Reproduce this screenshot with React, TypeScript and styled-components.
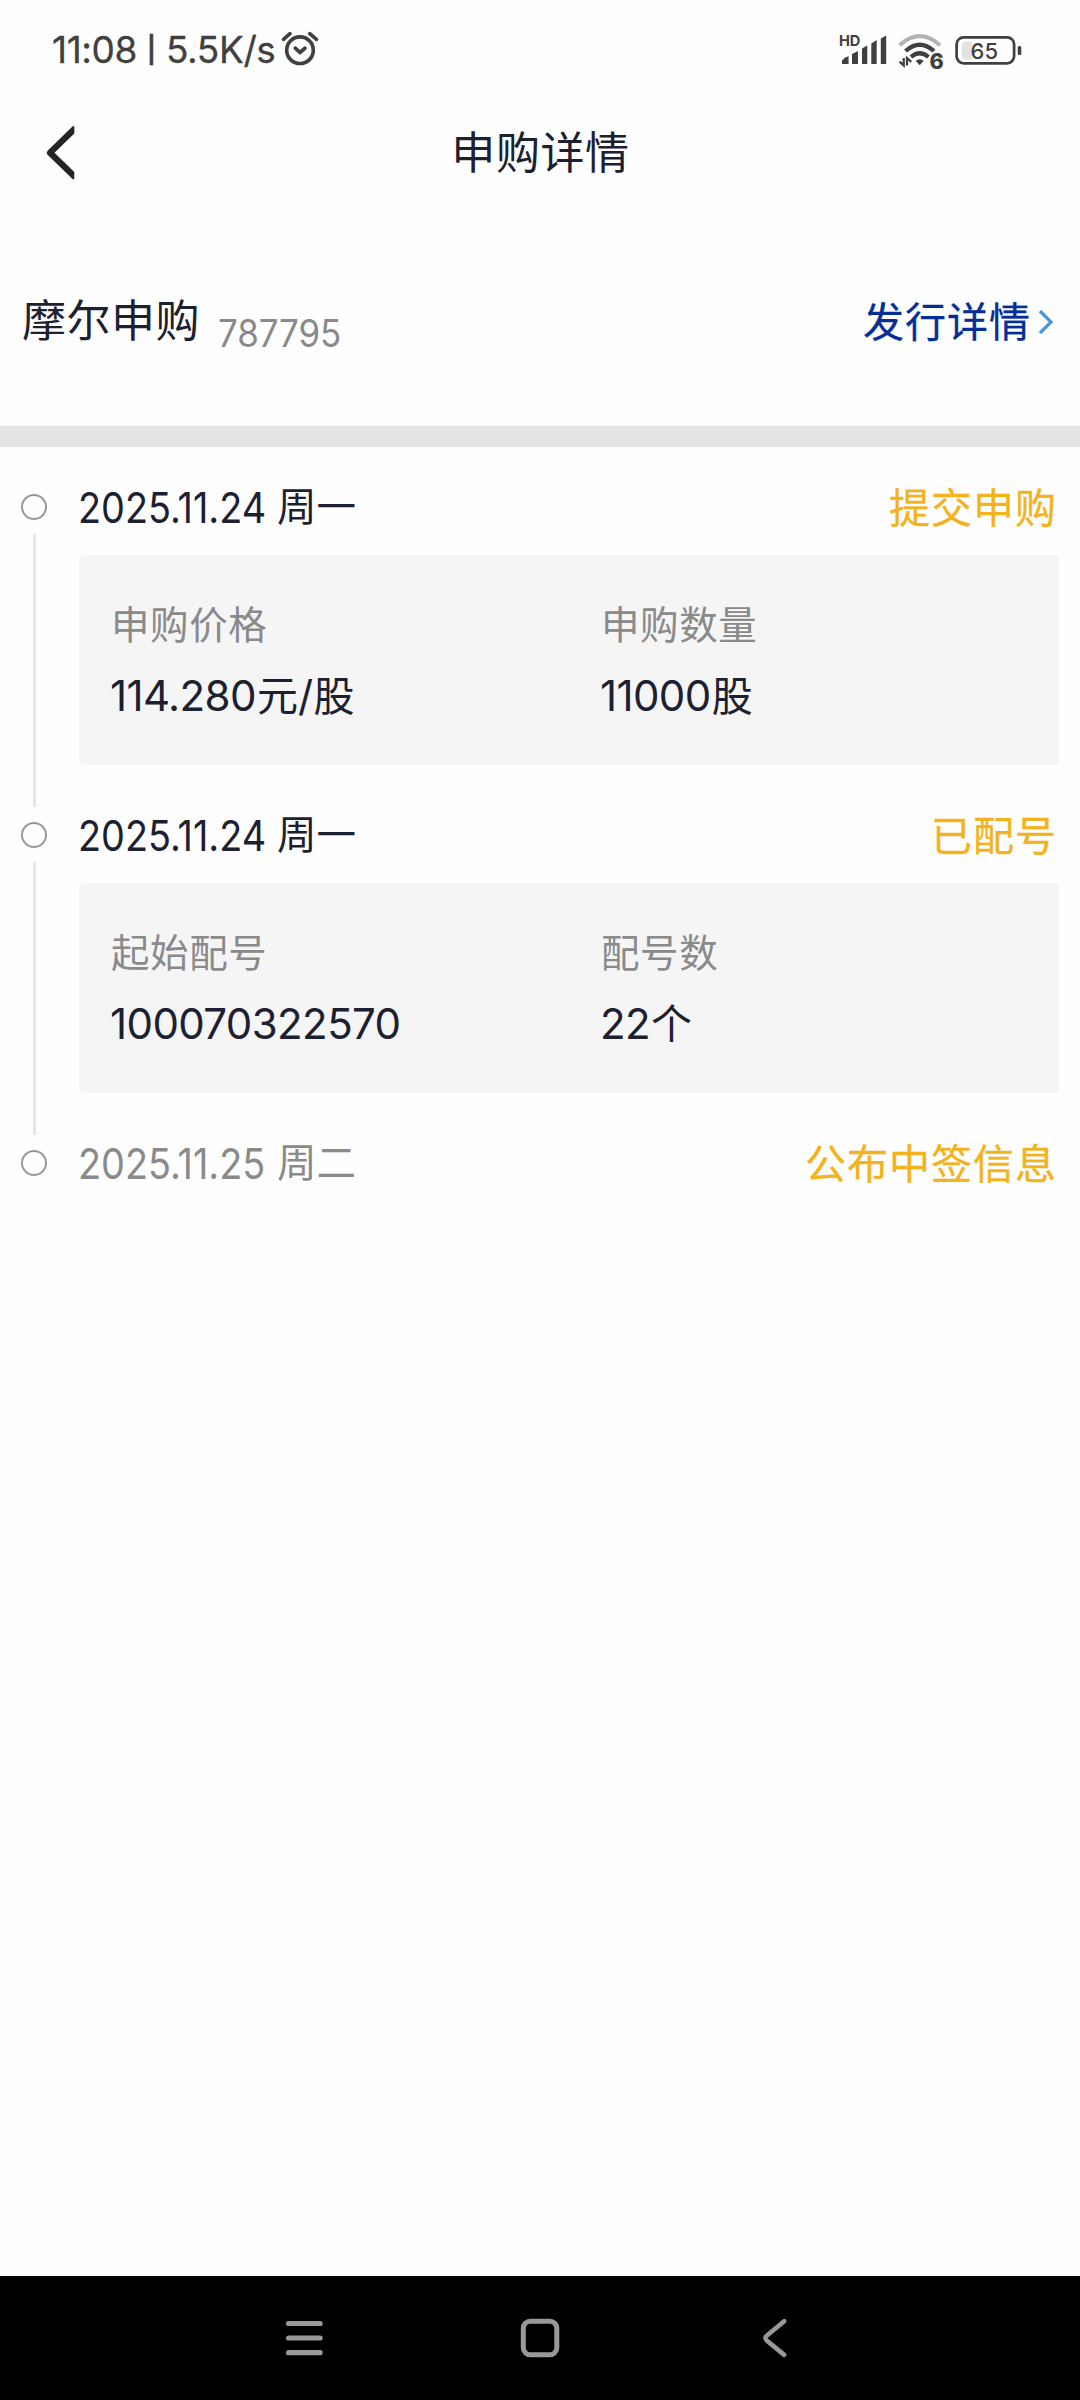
import React from "react";
import styled, { createGlobalStyle } from "styled-components";

const GlobalStyle = createGlobalStyle`
  * { box-sizing: border-box; }
  html, body { margin: 0; padding: 0; background: #fff; }
  body { font-family: Inter, "Noto Sans CJK SC", sans-serif; }
`;

const Screen = styled.div`
  width: 1080px;
  height: 2400px;
  display: flex;
  flex-direction: column;
  background: #fefefe;
  color: #1c2030;
  overflow: hidden;
`;

const StatusBar = styled.div`
  height: 100px;
  padding: 0 58px 0 52px;
  display: flex;
  align-items: center;
  justify-content: space-between;
  color: #404040;
`;

const StatusGroup = styled.div<{ $gap: number }>`
  display: flex;
  align-items: center;
  gap: ${(p) => p.$gap}px;
`;

const Clock = styled.span`
  display: flex;
  align-items: center;
  font-size: 37px;
  line-height: 60px;
  letter-spacing: -0.4px;
  white-space: pre;
  -webkit-text-stroke: 0.3px currentColor;
`;

const ClockPipe = styled.span`
  width: 29px;
  text-align: center;
  font-size: 26px;
  font-weight: 600;
  letter-spacing: 0;
`;

const NavBar = styled.div`
  height: 106px;
  display: grid;
  grid-template-columns: 120px 1fr 120px;
  align-items: center;
`;

const Title = styled.h1`
  margin: 0;
  padding: 0 0 0 1px;
  text-align: center;
  font-weight: 400;
  font-size: 44px;
  line-height: 60px;
  letter-spacing: 0.6px;
`;

const Summary = styled.section`
  height: 220px;
  padding: 10px 26px 0 22px;
  display: flex;
  align-items: center;
  justify-content: space-between;
`;

const Stock = styled.div`
  display: flex;
  align-items: center;
`;

const StockName = styled.span`
  font-size: 44px;
  line-height: 64px;
  letter-spacing: 0.5px;
`;

const StockCode = styled.span`
  margin: 24px 0 0 18px;
  font-size: 38px;
  line-height: 48px;
  letter-spacing: -0.1px;
  color: #8a8a8a;
  transform: scaleX(0.92);
  transform-origin: left center;
`;

const DetailLink = styled.a`
  padding-top: 1px;
  display: flex;
  align-items: center;
  font-size: 41px;
  line-height: 60px;
  letter-spacing: 1px;
  color: #052f96;
  -webkit-text-stroke: 0.3px currentColor;

  svg { margin-left: -3px; }
`;

const Divider = styled.div`
  height: 21px;
  background: #e3e4e6;
`;

const Timeline = styled.main`
  flex: 1;
  padding: 32px 21px 0;
`;

const Item = styled.div`
  display: grid;
  grid-template-columns: 26px 980px;
  column-gap: 32px;
`;

const Rail = styled.div`
  display: flex;
  flex-direction: column;
  align-items: center;
`;

const Dot = styled.i`
  width: 26px;
  height: 26px;
  margin: 15px 0 14px;
  flex: none;
  border: 2px solid #999;
  border-radius: 50%;
`;

const Line = styled.i`
  width: 3px;
  flex: 1;
  background: #e6e6e6;
`;

const ItemHead = styled.div`
  height: 55px;
  padding-right: 2px;
  display: flex;
  align-items: center;
  justify-content: space-between;
`;

const DateText = styled.span<{ $muted?: boolean }>`
  margin-left: -1px;
  padding-top: 1px;
  display: flex;
  align-items: center;
  font-size: 39.5px;
  line-height: 55px;
  color: ${(p) => (p.$muted ? "#8a8a8a" : "#1c2030")};
`;

const DateDigits = styled.span`
  width: 199px;
  font-size: 42px;
  white-space: nowrap;
  transform: scaleX(0.9);
  transform-origin: left center;
`;

const Digits = styled.span`
  margin-right: 1px;
  font-size: 42px;
  letter-spacing: -0.6px;
`;

const Status = styled.span`
  padding-top: 3px;
  font-size: 41px;
  line-height: 55px;
  letter-spacing: 1px;
  color: #f2b31c;
  -webkit-text-stroke: 0.3px currentColor;
`;

const Card = styled.div`
  height: 210px;
  margin: 21px 0 42px;
  padding: 40px 0 0 32px;
  display: grid;
  grid-template-columns: 490px 1fr;
  border-radius: 5px;
  background: #f5f5f6;
`;

const Field = styled.div`
  display: flex;
  flex-direction: column;
  gap: 11px;
`;

const Label = styled.span`
  font-size: 38.5px;
  line-height: 60px;
  letter-spacing: 0.6px;
  color: #8a8a8a;
`;

const Value = styled.span`
  margin-left: -1px;
  font-size: 41px;
  line-height: 60px;
`;

const SystemNav = styled.nav`
  height: 124px;
  padding: 0 1px;
  display: flex;
  justify-content: center;
  align-items: center;
  gap: 196px;
  background: #000;
`;

const Glyph = styled.svg`
  display: block;
  flex: none;
  overflow: visible;
`;

const AlarmIcon = () => (
  <Glyph width="40" height="36" viewBox="281 32.5 40 36" fill="none" stroke="#404040" strokeWidth="3.7" strokeLinecap="round" strokeLinejoin="round">
    <circle cx="301" cy="50.7" r="13.3" />
    <path d="M284.5 39.8 291 34.2M310.8 34.2 317.5 39.8M296.3 48.6 301 53 306 48.6" />
  </Glyph>
);

const SignalIcon = () => (
  <Glyph width="50" height="40" viewBox="839 30 50 40" fill="#404040">
    <text x="839" y="45.8" fontFamily="Inter" fontWeight="700" fontSize="14.6" letterSpacing="-0.2">HD</text>
    <path d="M842 64v-3.5q3-3.6 6.6-4.2V64zM852 64V54l6-3v13zM862 64V48.5l5.3-3V64zM871.3 64V43.5l5.4-3.5V64zM880.8 64V38.5l5.4-3V64z" />
  </Glyph>
);

const WifiIcon = () => (
  <Glyph width="48" height="40" viewBox="898 30 48 40" fill="none" stroke="#404040" strokeWidth="4.2">
    <path d="M899.5 45.2Q919.7 27 940 45.2" stroke="#b4b4b4" />
    <path d="M905.5 51Q919.7 38.5 934 51" />
    <path d="M911 57Q919.7 49.5 928.5 57" />
    <path d="M915.7 60.8q4-3.2 8 0l-4 4.5z" fill="#404040" stroke="none" />
    <path d="M903.7 58v7.5l-4.2-3.8M907 65.5V58l4.2 3.8" strokeWidth="2.3" />
    <text x="929.5" y="69" fill="#404040" stroke="none" fontFamily="Inter" fontWeight="800" fontSize="21.5">6</text>
  </Glyph>
);

const BatteryIcon = () => (
  <Glyph width="68" height="32" viewBox="954 33 68 32">
    <rect x="956.6" y="36.3" width="57.5" height="26" rx="7" fill="none" stroke="#404040" strokeWidth="2.7" />
    <path d="M972 40.5h-6.5q-3.5 0-3.5 3.5v11q0 3.5 3.5 3.5H972z" fill="#e2e2e2" />
    <rect x="1017.7" y="45" width="3.6" height="9" rx="1.5" fill="#404040" />
    <text x="984.3" y="57.8" textAnchor="middle" fill="#404040" fontFamily="Inter" fontWeight="500" fontSize="22">65</text>
  </Glyph>
);

const BackIcon = () => (
  <Glyph width="76" height="56" viewBox="0 125 76 56" fill="#222525">
    <path d="M74.3 126v7.5L54.5 152.7 74.3 172v7.6L72.5 179 47.8 155q-2-2.3 0-4.6L72.5 126.5z" />
  </Glyph>
);

type Part = { digits?: string; text?: string };

const Mixed = ({ parts }: { parts: Part[] }) => (
  <>
    {parts.map((p, i) =>
      p.digits ? <Digits key={i}>{p.digits}</Digits> : <React.Fragment key={i}>{p.text}</React.Fragment>
    )}
  </>
);

type Step = {
  date: string;
  weekday: string;
  status: string;
  muted?: boolean;
  fields?: { label: string; parts: Part[] }[];
};

const steps: Step[] = [
  {
    date: "2025.11.24",
    weekday: "周一",
    status: "提交申购",
    fields: [
      { label: "申购价格", parts: [{ digits: "114.280" }, { text: "元" }, { digits: "/" }, { text: "股" }] },
      { label: "申购数量", parts: [{ digits: "11000" }, { text: "股" }] },
    ],
  },
  {
    date: "2025.11.24",
    weekday: "周一",
    status: "已配号",
    fields: [
      { label: "起始配号", parts: [{ digits: "100070322570" }] },
      { label: "配号数", parts: [{ digits: "22" }, { text: "个" }] },
    ],
  },
  { date: "2025.11.25", weekday: "周二", status: "公布中签信息", muted: true },
];

export default function App() {
  return (
    <Screen>
      <GlobalStyle />
      <StatusBar>
        <StatusGroup $gap={5}>
          <Clock>
            11:08
            <ClockPipe>|</ClockPipe>
            5.5K/s
          </Clock>
          <AlarmIcon />
        </StatusGroup>
        <StatusGroup $gap={8.5}>
          <SignalIcon />
          <WifiIcon />
          <BatteryIcon />
        </StatusGroup>
      </StatusBar>
      <NavBar>
        <BackIcon />
        <Title>申购详情</Title>
      </NavBar>
      <Summary>
        <Stock>
          <StockName>摩尔申购</StockName>
          <StockCode>787795</StockCode>
        </Stock>
        <DetailLink>
          发行详情
          <Glyph width="26" height="28" viewBox="1028 307 26 28" fill="none" stroke="#4b96d8" strokeWidth="3.2">
            <path d="M1040 310 1051 321 1040 332" />
          </Glyph>
        </DetailLink>
      </Summary>
      <Divider />
      <Timeline>
        {steps.map((s, i) => (
          <Item key={i}>
            <Rail>
              <Dot />
              {s.fields && <Line />}
            </Rail>
            <div>
              <ItemHead>
                <DateText $muted={s.muted}>
                  <DateDigits>{s.date}</DateDigits>
                  {s.weekday}
                </DateText>
                <Status>{s.status}</Status>
              </ItemHead>
              {s.fields && (
                <Card>
                  {s.fields.map((f) => (
                    <Field key={f.label}>
                      <Label>{f.label}</Label>
                      <Value>
                        <Mixed parts={f.parts} />
                      </Value>
                    </Field>
                  ))}
                </Card>
              )}
            </div>
          </Item>
        ))}
      </Timeline>
      <SystemNav>
        <Glyph width="40" height="40" viewBox="284 2318 40 40" stroke="#999" strokeWidth="5.2" strokeLinecap="round">
          <path d="M288.6 2323.5h31.5M288.6 2338h31.5M288.6 2352.7h31.5" />
        </Glyph>
        <Glyph width="40" height="40" viewBox="520 2318 40 40" fill="none" stroke="#999" strokeWidth="5">
          <rect x="523.3" y="2321.2" width="33.5" height="33.5" rx="7" />
        </Glyph>
        <Glyph width="40" height="40" viewBox="756 2318 40 40" fill="none" stroke="#999" strokeWidth="4.6" strokeLinecap="round">
          <path d="M784.2 2321.3 767 2335.5Q763.8 2338 767 2340.8L784.2 2354.9" />
        </Glyph>
      </SystemNav>
    </Screen>
  );
}
